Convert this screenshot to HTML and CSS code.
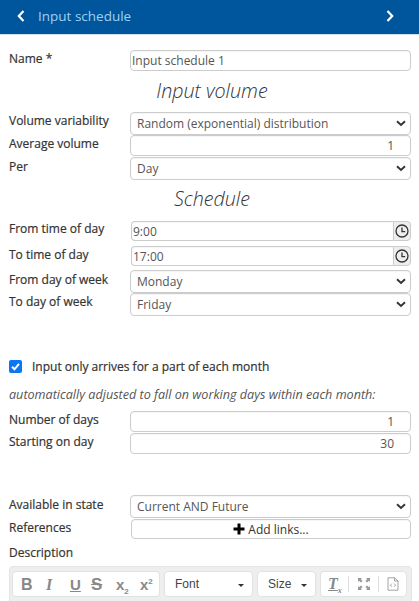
FILE: index.html
```html
<!DOCTYPE html>
<html lang="en">
<head>
<meta charset="utf-8">
<title>Input schedule</title>
<link rel="stylesheet" href="styles.css">
</head>
<body>
<header class="topbar">
  <svg class="nav-icon" viewBox="0 0 10 14"><path d="M7.5 2 L2.8 7 L7.5 12" /></svg>
  <span class="topbar-title">Input schedule</span>
  <svg class="nav-icon nav-next" viewBox="0 0 10 14"><path d="M2.5 2 L7.2 7 L2.5 12" /></svg>
</header>
<main class="form">
  <div class="row name-row"><label>Name *</label><div class="field text">Input schedule 1</div></div>
  <h2 class="section volume">Input volume</h2>
  <div class="row sel first"><label>Volume variability</label><div class="field select">Random (exponential) distribution<svg class="chev" viewBox="0 0 10 7"><path d="M1 1.2 L5 5 L9 1.2"/></svg></div></div>
  <div class="row num avg"><label>Average volume</label><div class="field number">1</div></div>
  <div class="row sel per"><label>Per</label><div class="field select">Day<svg class="chev" viewBox="0 0 10 7"><path d="M1 1.2 L5 5 L9 1.2"/></svg></div></div>
  <h2 class="section schedule">Schedule</h2>
  <div class="row time"><label>From time of day</label><div class="time-group"><div class="field text time-input">9:00</div><span class="clock"><svg viewBox="0 0 14 14"><circle cx="7" cy="7" r="6"/><path d="M7 3.4 V7.6 H10.2"/></svg></span></div></div>
  <div class="row time second"><label>To time of day</label><div class="time-group"><div class="field text time-input">17:00</div><span class="clock"><svg viewBox="0 0 14 14"><circle cx="7" cy="7" r="6"/><path d="M7 3.4 V7.6 H10.2"/></svg></span></div></div>
  <div class="row sel day1"><label>From day of week</label><div class="field select">Monday<svg class="chev" viewBox="0 0 10 7"><path d="M1 1.2 L5 5 L9 1.2"/></svg></div></div>
  <div class="row sel day2"><label>To day of week</label><div class="field select">Friday<svg class="chev" viewBox="0 0 10 7"><path d="M1 1.2 L5 5 L9 1.2"/></svg></div></div>
  <div class="check-row">
    <span class="checkbox"><svg viewBox="0 0 13 13"><path d="M3 6.8 L5.5 9.3 L10 3.9"/></svg></span>
    <span class="check-label">Input only arrives for a part of each month</span>
  </div>
  <p class="note">automatically adjusted to fall on working days within each month:</p>
  <div class="row num days"><label>Number of days</label><div class="field number">1</div></div>
  <div class="row num start"><label>Starting on day</label><div class="field number">30</div></div>
  <div class="row sel state"><label>Available in state</label><div class="field select">Current AND Future<svg class="chev" viewBox="0 0 10 7"><path d="M1 1.2 L5 5 L9 1.2"/></svg></div></div>
  <div class="row refs"><label>References</label><button class="field links" type="button"><svg class="plus" viewBox="0 0 12 12"><path d="M6 .5 V11.5 M.5 6 H11.5"/></svg>Add links...</button></div>
  <div class="desc-label">Description</div>
  <div class="editor">
    <div class="toolbar">
      <div class="group basic">
        <span class="tool t-b">B</span>
        <span class="tool t-i">I</span>
        <span class="tool t-u">U</span>
        <span class="tool t-s">S</span>
        <span class="tool t-x t-sub">x<sub>2</sub></span>
        <span class="tool t-x">x<sup>2</sup></span>
      </div>
      <div class="group combo font-combo">Font<span class="caret"></span></div>
      <div class="group combo size-combo">Size<span class="caret"></span></div>
      <div class="group tools">
        <span class="tool t-clear">T<sub>x</sub></span>
        <span class="sep"></span>
        <svg class="tool-svg" viewBox="0 0 14 14"><path d="M1 1 H5 L3.8 2.2 L5.6 4 L4 5.6 L2.2 3.8 L1 5 Z M13 1 V5 L11.8 3.8 L10 5.6 L8.4 4 L10.2 2.2 L9 1 Z M1 13 V9 L2.2 10.2 L4 8.4 L5.6 10 L3.8 11.8 L5 13 Z M13 13 H9 L10.2 11.8 L8.4 10 L10 8.4 L11.8 10.2 L13 9 Z"/></svg>
        <span class="sep"></span>
        <svg class="tool-svg source" viewBox="0 0 12 14"><path d="M1 .8 H7.5 L11 4 V13.2 H1 Z M7.5 .8 V4 H11 M4.8 6.6 L3.4 8.2 L4.8 9.8 M7.2 6.6 L8.6 8.2 L7.2 9.8"/></svg>
      </div>
    </div>
  </div>
</main>
</body>
</html>
```
FILE: styles.css
```css
* { box-sizing: border-box; }
html, body { margin: 0; padding: 0; }
body {
  width: 419px;
  height: 601px;
  overflow: hidden;
  background: #fff;
  font-family: "Open Sans", sans-serif;
  font-size: 12px;
  color: #333;
}
.topbar {
  height: 35px;
  background: #00569c;
  border-bottom: 1px solid #d5dde5;
  display: flex;
  align-items: center;
  padding: 0 24px 2px 16px;
}
.topbar-title { color: #9fd0f5; font-size: 13.5px; margin-left: 12px; }
.nav-icon { width: 10px; height: 14px; fill: none; stroke: #fff; stroke-width: 2.2; }
.nav-next { margin-left: auto; }
.form { padding: 0 7px 0 9px; }
.row {
  display: grid;
  grid-template-columns: 121px 281px;
  align-items: start;
}
.row label { font-size: 12px; line-height: 16px; color: #333; font-weight: 500; -webkit-text-stroke: .2px #333; }
.field {
  border: 1px solid #ccc;
  border-radius: 4px;
  background: #fff;
  font-size: 12px;
  color: #555;
  display: flex;
  align-items: center;
  box-shadow: inset 0 1px 1px rgba(0,0,0,.04);
}
.text { height: 21px; padding-left: 1px; }
.select { height: 23px; padding-left: 6px; position: relative; }
.number { height: 21px; justify-content: flex-end; padding-right: 16px; }
.chev {
  position: absolute;
  right: 4px;
  top: 7px;
  width: 10px;
  height: 7px;
  fill: none;
  stroke: #333;
  stroke-width: 1.9;
}
.name-row { margin-top: 15px; }
.name-row label, .first label { margin-top: 1px; }
.avg label, .second label, .day2 label, .days label, .start label, .refs label { margin-top: 1px; }
.per label, .day1 label, .state label { margin-top: 2px; }
.section {
  margin: 0;
  font-size: 19.7px;
  line-height: 25px;
  font-weight: 300;
  font-style: italic;
  text-align: center;
  color: #333;
}
.volume { margin: 7px 0 9px; padding-left: 3px; }
.per { margin-top: 1px; }
.schedule { margin: 6px 0 10px; padding-left: 3px; }
.time-group { display: flex; margin-left: 1px; width: 280px; }
.time-input { flex: 1; border-radius: 4px 0 0 4px; border-right: 0; height: 20px; }
.clock {
  width: 18px;
  height: 20px;
  background: #eee;
  border: 1px solid #ccc;
  border-radius: 0 4px 4px 0;
  display: flex;
  align-items: center;
  justify-content: center;
}
.clock svg { width: 14px; height: 14px; fill: none; stroke: #333; stroke-width: 1.3; }
.second { margin-top: 5px; }
.day1 { margin-top: 4px; }
.check-row { display: flex; align-items: center; margin-top: 41px; height: 19px; }
.checkbox {
  width: 13px;
  height: 13px;
  background: #0b75f2;
  border-radius: 2px;
  display: block;
}
.checkbox svg { display: block; width: 13px; height: 13px; fill: none; stroke: #fff; stroke-width: 2; }
.check-label { margin-left: 10px; font-size: 12px; -webkit-text-stroke: .2px #333; }
.note {
  margin: 11px 0 0;
  font-size: 12.6px;
  line-height: 16px;
  font-style: italic;
  font-weight: 400;
  color: #555;
  white-space: nowrap;
}
.days { margin-top: 8px; }
.start { margin-top: 1px; }
.state { margin-top: 41px; }
.refs { margin-top: 1px; }
.links {
  height: 20px;
  width: 280px;
  margin-left: 1px;
  padding: 0;
  justify-content: center;
  font-family: inherit;
  color: #333;
}
.plus { width: 12px; height: 12px; margin-right: 3px; fill: none; stroke: #000; stroke-width: 3; }
.desc-label { margin-top: 6px; line-height: 16px; -webkit-text-stroke: .2px #333; }
.editor {
  margin-top: 5px;
  width: 403px;
  height: 40px;
  background: #eee;
  border: 1px solid #e4e4e4;
  border-radius: 4px 4px 0 0;
  padding: 4px 2px 0;
}
.toolbar { display: flex; gap: 4px; }
.group {
  height: 26px;
  background: #fff;
  border: 1px solid #e2e2e2;
  border-radius: 4px;
  display: flex;
  align-items: center;
  flex: none;
}
.basic { width: 148px; padding-left: 8px; }
.tool { flex: none; color: #888; font-family: "Liberation Sans", sans-serif; font-size: 15px; line-height: 15px; display: block; font-weight: 700; }
.tool sub, .tool sup { font-size: 8px; line-height: 0; }
.t-b { width: 25px; font-size: 16px; }
.t-i { font-family: "Liberation Serif", serif; font-style: italic; width: 24px; font-size: 16px; }
.t-u { text-decoration: underline; width: 21px; }
.t-s { text-decoration: line-through; width: 25px; font-size: 17px; }
.t-x { width: 24px; }
.combo { font-family: "Liberation Sans", sans-serif; font-size: 12px; color: #444; position: relative; padding-left: 10px; }
.font-combo { width: 89px; }
.size-combo { width: 59px; }
.caret {
  position: absolute;
  right: 8px;
  top: 12px;
  border-top: 3px solid #333;
  border-left: 3px solid transparent;
  border-right: 3px solid transparent;
}
.tools { width: 87px; padding-left: 7px; }
.t-clear { font-family: "Liberation Serif", serif; font-style: italic; text-decoration: underline; font-size: 16px; width: 20px; }
.sep { width: 1px; height: 16px; background: #ddd; margin: 0 8px 0 0; }
.tool-svg { flex: none; width: 14px; height: 14px; fill: #999; margin-right: 7px; }
.tool-svg.source { fill: none; stroke: #999; stroke-width: .9; width: 12px; margin-right: 0; }
```
